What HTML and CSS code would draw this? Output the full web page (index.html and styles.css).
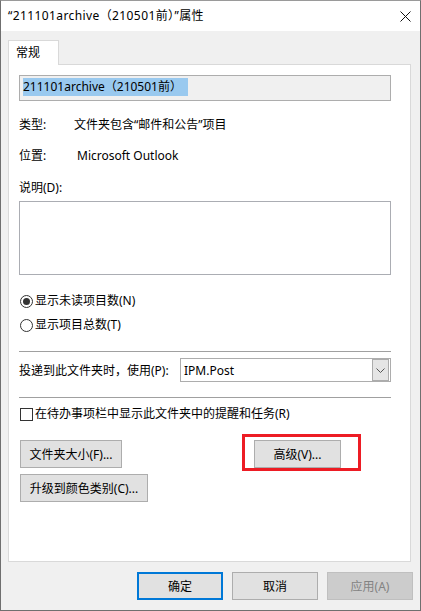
FILE: index.html
```html
<!DOCTYPE html>
<html lang="zh-CN">
<head>
    <meta charset="UTF-8">
    <meta name="viewport" content="width=device-width, initial-scale=1.0">
    <title>文件夹属性</title>
    <link rel="stylesheet" href="styles.css">
</head>
<body>

    <div class="window">
        <div class="titlebar">
            <span class="title">“211101archive（210501前）”属性</span>
            <svg class="close" width="11" height="11" viewBox="0 0 11 11">
                <path d="M0.5 0.5 L10.5 10.5 M10.5 0.5 L0.5 10.5" stroke="#111" stroke-width="1" fill="none"/>
            </svg>
        </div>

        <div class="tabs">
            <div class="tab">常规</div>
        </div>

        <div class="panel">
            <div class="name-field"><span class="selected">211101archive（210501前）</span></div>

            <div class="info-row row-type">
                <span class="info-label">类型:</span>
                <span class="info-value">文件夹包含“邮件和公告”项目</span>
            </div>
            <div class="info-row row-place">
                <span class="info-label">位置:</span>
                <span class="info-value outlook">Microsoft Outlook</span>
            </div>

            <div class="desc-label">说明(D):</div>
            <div class="desc-box"></div>

            <div class="option first-option">
                <span class="radio checked"></span>
                <span>显示未读项目数(N)</span>
            </div>
            <div class="option second-option">
                <span class="radio"></span>
                <span>显示项目总数(T)</span>
            </div>

            <div class="separator sep-top"></div>

            <div class="post-row">
                <span class="post-label">投递到此文件夹时，使用(P):</span>
                <div class="combo">
                    <span class="combo-text">IPM.Post</span>
                    <span class="combo-button">
                        <svg width="9" height="5" viewBox="0 0 9 5">
                            <path d="M0.5 0.5 L4.5 4.5 L8.5 0.5" stroke="#555" stroke-width="1" fill="none"/>
                        </svg>
                    </span>
                </div>
            </div>

            <div class="separator sep-bottom"></div>

            <div class="option check-row">
                <span class="checkbox"></span>
                <span>在待办事项栏中显示此文件夹中的提醒和任务(R)</span>
            </div>

            <div class="button-row first-buttons">
                <button class="btn btn-size">文件夹大小(F)...</button>
                <span class="marked">
                    <button class="btn btn-advanced">高级(V)...</button>
                </span>
            </div>
            <div class="button-row second-buttons">
                <button class="btn btn-color">升级到颜色类别(C)...</button>
            </div>
        </div>

        <div class="footer">
            <button class="btn btn-footer btn-default">确定</button>
            <button class="btn btn-footer">取消</button>
            <button class="btn btn-footer btn-disabled">应用(A)</button>
        </div>
    </div>

</body>
</html>
```

FILE: styles.css
```css
body {
    margin: 0;
    font-family: "Noto Sans", "Noto Sans CJK SC", sans-serif;
    font-size: 12px;
    color: #000;
    background-color: #f0f0f0;
}

.window {
    width: 421px;
    height: 611px;
    box-sizing: border-box;
    border: 1px solid #6f6f6f;
    border-top-color: #9a9a9a;
    background-color: #f0f0f0;
}

/* 标题栏 */
.titlebar {
    height: 30px;
    background-color: #fff;
    display: flex;
    align-items: center;
    justify-content: space-between;
    padding: 0 9px 0 7px;
}

.title {
    line-height: 20px;
    letter-spacing: 0.4px;
}

.close {
    display: block;
}

/* 选项卡 */
.tabs {
    display: flex;
    padding: 9px 0 0 7px;
}

.tab {
    width: 51px;
    height: 25px;
    box-sizing: border-box;
    padding: 0 0 0 7px;
    line-height: 23px;
    background-color: #fff;
    border: 1px solid #d9d9d9;
    border-bottom: none;
    position: relative;
    z-index: 1;
    margin-bottom: -1px;
}

.panel {
    width: 403px;
    height: 498px;
    box-sizing: border-box;
    margin-left: 7px;
    background-color: #fff;
    border: 1px solid #d9d9d9;
    padding: 10px 19px 0 10px;
}

.name-field {
    height: 26px;
    box-sizing: border-box;
    border: 1px solid #adadad;
    background-color: #f0f0f0;
    padding: 2px 0 0 3px;
}

.selected {
    display: inline-block;
    height: 18px;
    line-height: 18px;
    padding-right: 6px;
    background-color: #99c9ef;
}

.info-row {
    display: flex;
    height: 20px;
    line-height: 20px;
}

.row-type {
    margin-top: 14px;
}

.row-place {
    margin-top: 11px;
}

.info-label {
    width: 55px;
}

.outlook {
    margin-left: 3px;
}

.desc-label {
    margin-top: 12px;
    height: 20px;
    line-height: 20px;
}

.desc-box {
    margin-top: 3px;
    height: 74px;
    box-sizing: border-box;
    border: 1px solid #abadb3;
    background-color: #fff;
}

.option {
    display: flex;
    align-items: center;
    height: 20px;
    line-height: 20px;
    padding-left: 1px;
}

.first-option {
    margin-top: 16px;
}

.second-option {
    margin-top: 4px;
}

.radio {
    width: 13px;
    height: 13px;
    box-sizing: border-box;
    border: 1px solid #333;
    border-radius: 50%;
    background-color: #fff;
    margin-right: 2px;
    display: flex;
    align-items: center;
    justify-content: center;
}

.radio.checked::after {
    content: "";
    width: 7px;
    height: 7px;
    border-radius: 50%;
    background-color: #333;
}

.checkbox {
    width: 13px;
    height: 13px;
    box-sizing: border-box;
    border: 1px solid #333;
    background-color: #fff;
    margin-right: 2px;
}

.check-row {
    margin-top: 6px;
}

.separator {
    height: 1px;
    background-color: #a0a0a0;
}

.sep-top {
    margin-top: 16px;
}

.sep-bottom {
    margin-top: 15px;
}

/* 投递行 */
.post-row {
    display: flex;
    align-items: center;
    margin-top: 6px;
    height: 24px;
}

.post-label {
    width: 161px;
}

.combo {
    width: 211px;
    height: 24px;
    box-sizing: border-box;
    border: 1px solid #adadad;
    background-color: #fff;
    display: flex;
    align-items: center;
    justify-content: space-between;
    padding-left: 3px;
}

.combo-button {
    width: 17px;
    height: 22px;
    box-sizing: border-box;
    margin-right: 1px;
    background-color: #e5e5e5;
    border: 1px solid #acacac;
    display: flex;
    align-items: center;
    justify-content: center;
}

.combo-button svg {
    display: block;
}

/* 按钮 */
.btn {
    font-family: inherit;
    font-size: 12px;
    color: #000;
    height: 28px;
    box-sizing: border-box;
    padding: 0;
    border: 1px solid #adadad;
    background-color: #e1e1e1;
    border-radius: 0;
}

.button-row {
    display: flex;
    padding-left: 1px;
}

.first-buttons {
    margin-top: 16px;
}

.second-buttons {
    margin-top: 6px;
}

.btn-size {
    width: 102px;
}

.btn-color {
    width: 128px;
}

.marked {
    position: relative;
    margin-left: 132px;
    display: flex;
}

.marked::after {
    content: "";
    position: absolute;
    top: -6px;
    left: -12px;
    right: -20px;
    bottom: -3px;
    border: 3px solid #ed1c24;
}

.btn-advanced {
    width: 87px;
}

.footer {
    display: flex;
    justify-content: flex-end;
    gap: 9px;
    margin-top: 10px;
    padding-right: 7px;
}

.btn-footer {
    width: 86px;
}

.btn-default {
    border: 2px solid #0078d7;
}

.btn-disabled {
    background-color: #cccccc;
    border-color: #bfbfbf;
    color: #838383;
}
```
